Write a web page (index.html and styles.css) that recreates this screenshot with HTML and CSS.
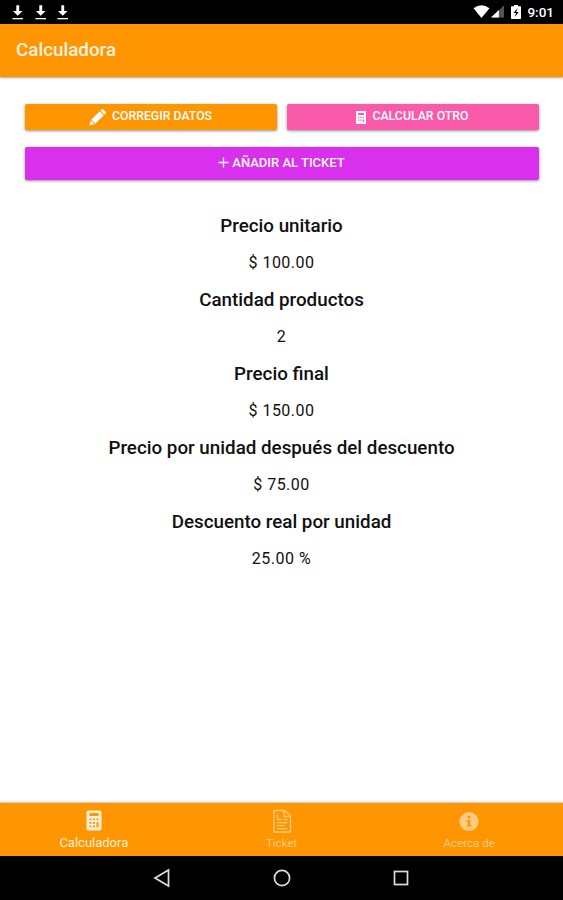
FILE: index.html
```html
<!DOCTYPE html>
<html lang="es">

<head>
	<meta charset="utf-8">
	<meta name="viewport" content="width=device-width, initial-scale=1">

	<title>Calculadora</title>

	<link rel="stylesheet" href="styles.css">
</head>

<body>
	<!-- android status bar -->
	<div class="status-bar">
		<div class="status-left">
			<svg class="download" viewBox="0 0 12 17"><path d="M4.5 1h3v6H11l-5 5-5-5h3.500z"/><path d="M0.500 14.200h11v1.400h-11z"/></svg>
			<svg class="download" viewBox="0 0 12 17"><path d="M4.5 1h3v6H11l-5 5-5-5h3.500z"/><path d="M0.500 14.200h11v1.400h-11z"/></svg>
			<svg class="download" viewBox="0 0 12 17"><path d="M4.5 1h3v6H11l-5 5-5-5h3.500z"/><path d="M0.500 14.200h11v1.400h-11z"/></svg>
		</div>
		<div class="status-right">
			<svg class="wifi" viewBox="0 0 17 14"><path d="M0.500 3.200Q8.500-2.600 16.500 3.200L8.500 13z"/></svg>
			<svg class="signal" viewBox="0 0 14 13"><path class="dim" d="M14 0v13H0z"/><path d="M8.500 5v8H0z"/></svg>
			<svg class="battery" viewBox="0 0 10 14"><path fill-rule="evenodd" d="M3 0h4v1.300h2.300q.7 0 .7.700v11.300q0 .7-.7.700H.7q-.7 0-.7-.7V2q0-.7.7-.7H3zM6.700 3L2.500 8H5l-1.200 4L7.700 7H5.200z"/></svg>
			<span class="clock">9:01</span>
		</div>
	</div>

	<header class="toolbar">
		<h1>Calculadora</h1>
	</header>

	<main class="container">
		<div class="btn-row">
			<button class="btn btn-orange">
				<svg class="icon-pencil" viewBox="0 0 17 17"><path d="M2.200 10.800L10.800 2.200l4 4-8.600 8.600zM11.500 1.500l1-1q.9-.8 1.800 0l2.200 2.200q.8.900 0 1.800l-1 1zM1.700 11.600l3.700 3.700L.4 16.600z"/></svg>
				<span>Corregir datos</span>
			</button>
			<button class="btn btn-pink">
				<svg class="icon-calc-small" viewBox="0 0 10 13"><rect width="10" height="13" rx="1"/><path class="cut" d="M2 2h6v2H2zM2 6h1.300v1.200H2zM4.400 6h1.300v1.200H4.400zM6.800 6H8v1.200H6.800zM2 8.500h1.300v1.200H2zM4.400 8.500h1.300v1.200H4.400zM6.800 8.500H8v2.800H6.800z"/></svg>
				<span>Calcular otro</span>
			</button>
		</div>
		<button class="btn btn-purple">
			<svg class="icon-plus" viewBox="0 0 11 11"><path d="M5.500 0.500v10M0.500 5.500h10"/></svg>
			<span>Añadir al ticket</span>
		</button>

		<div class="results">
			<h3>Precio unitario</h3>
			<p>$ 100.00</p>
			<h3>Cantidad productos</h3>
			<p>2</p>
			<h3>Precio final</h3>
			<p>$ 150.00</p>
			<h3>Precio por unidad después del descuento</h3>
			<p>$ 75.00</p>
			<h3>Descuento real por unidad</h3>
			<p>25.00 %</p>
		</div>
	</main>

	<nav class="tabs">
		<a class="tab active">
			<svg class="tab-icon" viewBox="0 0 22 24"><rect x="3.500" y="1.500" width="15" height="20" rx="2"/><path class="cut" d="M6.500 4h9v3h-9zM6.500 9.500h2v1.700h-2zM10 9.500h2v1.700h-2zM13.500 9.500h2v1.700h-2zM6.500 13h2v1.700h-2zM10 13h2v1.700h-2zM6.500 16.500h2v1.700h-2zM10 16.500h2v1.700h-2zM13.500 13h2v5.200h-2z"/></svg>
			<span>Calculadora</span>
		</a>
		<a class="tab">
			<svg class="tab-icon outline" viewBox="0 0 22 24"><path d="M3 1.500h10.500L19.500 7v16H3zM13 1.500V7.500h6M6.500 5.500v5h4M6 13.700h10.500M6 16.700h8M6 19.700h10.500M12.500 10.700h4"/></svg>
			<span>Ticket</span>
		</a>
		<a class="tab">
			<svg class="tab-icon" viewBox="0 0 22 24"><circle cx="11" cy="12.500" r="9.600"/><circle class="cut" cx="11" cy="8" r="1.500"/><path class="cut" d="M8.800 10.900h3.400v5.100h1.300v1.500H8.600V16h1.300v-3.600H8.800z"/></svg>
			<span>Acerca de</span>
		</a>
	</nav>

	<!-- android navigation buttons -->
	<div class="nav-bar">
		<svg viewBox="0 0 20 20"><path d="M16.500 2v16L3 10z"/></svg>
		<svg viewBox="0 0 20 20"><circle cx="10" cy="10" r="7.600"/></svg>
		<svg viewBox="0 0 20 20"><rect x="3.500" y="3.500" width="13" height="13"/></svg>
	</div>
</body>

</html>
```
FILE: styles.css
```css
:root {
	--orange: #ff9500;
	--pink: #fa5aaa;
	--purple: #d930ee;
	--text-color: #101010;
	--tab-inactive: #ffcb80;
	--tab-active: #fff0d8;
}
* {
	margin: 0;
	padding: 0;
	border: 0;
	box-sizing: border-box;
}
body {
	display: flex;
	flex-direction: column;
	height: 100vh;
	overflow: hidden;
	background: #fff;
	color: var(--text-color);
	font-family: Roboto, sans-serif;
}
svg {
	display: block;
	flex: none;
	fill: currentColor;
}

/* status bar */
.status-bar {
	display: flex;
	justify-content: space-between;
	align-items: center;
	height: 23.5px;
	padding: 0 9px 0 12px;
	background: #000;
	color: #fff;
}
.status-left, .status-right {
	display: flex;
	align-items: center;
}
.status-left {
	gap: 11px;
	padding-top: 1px;
}
.download {
	width: 11.5px;
	height: 17px;
}
.wifi {
	width: 17px;
	height: 14px;
}
.signal {
	width: 13px;
	height: 13px;
	margin-left: 1px;
}
.signal .dim {
	fill: #555;
}
.battery {
	width: 10px;
	height: 14px;
	margin-left: 7px;
}
.clock {
	margin-left: 6px;
	font-size: 13.5px;
	font-weight: 500;
	line-height: 23px;
	padding-top: 2px;
}

.toolbar {
	display: flex;
	align-items: center;
	height: 53px;
	padding: 0 16px;
	background: var(--orange);
	color: #fff3e0;
	box-shadow: 0 1px 2px rgba(0, 0, 0, 0.35);
}
.toolbar h1 {
	font-size: 18.8px;
	font-weight: 500;
}

.container {
	flex: 1;
	padding: 27.5px 24.5px 0;
}
.btn-row {
	display: flex;
	gap: 10px;
	margin-bottom: 17px;
}
.btn {
	display: flex;
	flex: 1;
	justify-content: center;
	align-items: center;
	height: 25.5px;
	padding-bottom: 1px;
	border-radius: 2px;
	color: #fff;
	font-family: inherit;
	font-size: 12.3px;
	font-weight: 500;
	text-transform: uppercase;
	box-shadow: 0 1px 3px rgba(0, 0, 0, 0.45);
}
.btn-orange {
	background: var(--orange);
}
.btn-pink {
	background: var(--pink);
}
.btn-purple {
	width: 100%;
	height: 33.5px;
	background: var(--purple);
	font-size: 13px;
}
.btn .icon-pencil {
	width: 17px;
	height: 17px;
	margin: 2px 6px 0 0;
}
.btn .icon-calc-small {
	width: 10px;
	height: 13px;
	margin: 3px 6px 0 0;
}
.icon-calc-small .cut {
	fill: var(--pink);
}
.btn .icon-plus {
	width: 11px;
	height: 11px;
	margin-right: 3px;
	stroke: currentColor;
	stroke-width: 1.3;
}

.results {
	padding-top: 33px;
	text-align: center;
}
.results h3 {
	height: 26px;
	font-size: 18.8px;
	font-weight: 500;
	line-height: 26px;
}
.results p {
	height: 20px;
	margin: 13.5px 0 14.5px;
	font-size: 16px;
	line-height: 20px;
	letter-spacing: 0.5px;
}

/* bottom tabs */
.tabs {
	display: flex;
	height: 53px;
	background: var(--orange);
	box-shadow: 0 -1px 2px rgba(0, 0, 0, 0.25);
}
.tab {
	display: flex;
	flex: 1;
	flex-direction: column;
	align-items: center;
	padding-top: 6px;
	color: var(--tab-inactive);
	font-size: 11.5px;
	line-height: 18px;
}
.tab.active {
	color: var(--tab-active);
	font-size: 13px;
}
.tab-icon {
	width: 22px;
	height: 24px;
	margin-bottom: 1px;
}
.tab-icon .cut {
	fill: var(--orange);
}
.tab-icon.outline {
	fill: none;
	stroke: currentColor;
	stroke-width: 1.3;
}

.nav-bar {
	display: flex;
	justify-content: center;
	align-items: center;
	gap: 99.5px;
	height: 44px;
	background: #000;
}
.nav-bar svg {
	width: 20px;
	height: 20px;
	fill: none;
	stroke: #ddd;
	stroke-width: 1.7;
}
```
